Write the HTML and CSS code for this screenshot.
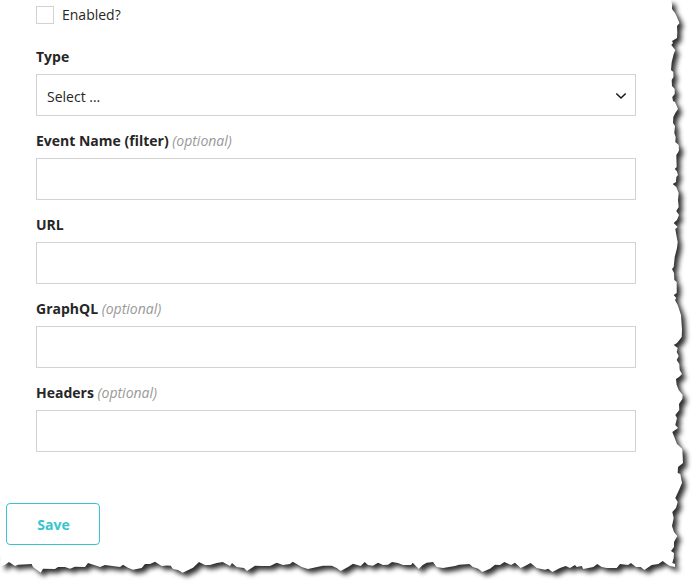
FILE: index.html
```html
<!DOCTYPE html>
<html lang="en">
<head>
<meta charset="utf-8">
<title>Webhook</title>
<link rel="stylesheet" href="styles.css">
</head>
<body>
<svg class="paper" width="693" height="583" viewBox="0 0 693 583" aria-hidden="true">
<path d="M1 0 L671 0 672 4 672 9 675 13 676.5 16 679.5 23 677 26 677.3 33 677 38 672 41 673 43 671.3 45 675.3 50 673.7 54 671.7 62 671 70 673.3 72 673.5 77 671.7 80 672 86 674.7 89 674.7 94 672.3 97 673 101 675 102 678 109 675.3 113 673.3 117 673 123 675 126 674.3 133 675.7 137 675.3 142 678.7 145 679 150 678.3 152 676.3 155 676.7 167 674.7 169 676.7 171 678 175 676.3 177 676 182 672.7 184 676.3 187 678.7 193 678 200 678.7 207 676.3 211 679 215 677 220 673.7 223 677.7 227 675.3 229 676.7 237 677.7 242 677 248 674.7 257 673.7 267 672 269 674 273 674.3 280 676.7 282 676.7 293 673.7 295 676.3 298 675 300 677.7 305 681 315 682 330 681.7 337 677 343 673.7 345 677.7 348 676.7 352 678.7 356 676.7 360 679.3 364 679.7 370 682 374 679 377 676 379 676.7 385 678.7 390 682.7 395 682.3 399 679 404 679.3 410 675.3 415 677 418 675.3 425 678 428 672.3 432 674.3 437 677 444 682.3 449 683 463 678 467 677.7 473 680.3 474 682 483 679 490 675.3 498 677.7 502 676 508 672.3 512 673.7 518 672 526 674 532 677.3 536 674 542 674 547 671 551 674 553 673.7 558 672.3 563 675 564 675 567
L670 566 666.7 564 662.7 561 658.3 564 651.7 565 644.3 570 640.7 567 636 567 631 563 628 565 620 564 616.7 568 606.7 568 601.7 567 597.3 564 593.3 567 583.3 569 581.7 566 576.7 567 575 565 570 568 565.7 566 560 568 552.3 572 548.3 568.7 545 569.7 536.7 568 530.7 563 525 566 520.7 568 515 562.7 511 565 504.3 562 500 565 495 564.7 490 568.7 482.3 572 478.3 568.7 473 567 469.3 564 459 564.7 455 566 443 568 436.7 567 433 562 426.7 562.7 422.7 565 418.7 569 412.7 562.7 411 565 403 565 398 563 392 562 388 564.7 383 565 378 562.7 373 565.7 368 565 364.7 562 360.7 566 353 563.7 348 567 340.7 571 336.7 568 331.7 565.7 323 565.7 317 567 308 569 301.7 567 296.7 564 292.7 561.7 290 564 283 565 276.7 562.7 270 566 262 566 255 565.7 247 571 244 568 236.7 567 232 563
L230 566 222.7 562 216.7 563 210 565 205 565 199 562 193 567.7 182.7 572.7 178 570 173 569 170.7 565.7 167 565.5 161.7 566 155 561.7 150 564 145 564 141.7 568 133 569.7 128 567.7 123 564.7 120 567 105 565 100 567 88 563 85 567 75 566.7 70 568.7 65 567 58 567 55 569 43 568.7 40.7 572.7 33 567 31.7 564 18 564.7 15 566 9 562 5 564.7 1 566Z"/>
</svg>
<form class="form">
  <div class="fields">
    <label class="check"><span class="box"></span>Enabled?</label>
    <div class="field">
      <div class="label">Type</div>
      <div class="control select">
        <span>Select ...</span>
        <svg width="12" height="8" viewBox="0 0 12 8"><path d="M1.3 1.5 6 6 10.7 1.5" fill="none" stroke="#161616" stroke-width="1.5"/></svg>
      </div>
    </div>
    <div class="field"><div class="label">Event Name (filter) <em>(optional)</em></div><div class="control"></div></div>
    <div class="field"><div class="label">URL</div><div class="control"></div></div>
    <div class="field"><div class="label">GraphQL <em>(optional)</em></div><div class="control"></div></div>
    <div class="field"><div class="label">Headers <em>(optional)</em></div><div class="control"></div></div>
  </div>
  <button class="save" type="button">Save</button>
</form>
</body>
</html>
```
FILE: styles.css
```css
* { box-sizing: border-box; }
body {
  margin: 0;
  height: 583px;
  overflow: hidden;
  background: #fff;
  color: #262626;
  font: 14px/20px "Open Sans", "Noto Sans", sans-serif;
}
.paper {
  position: absolute;
  top: 0;
  left: 0;
  z-index: -1;
  fill: #fff;
  filter: drop-shadow(4px 4px 2.6px rgba(0, 0, 0, 0.82));
}
.form { width: 660px; height: 555px; padding: 5px 0 0 6px; background: #fff; }
.fields { width: 600px; margin-left: 30px; }
.check { display: flex; align-items: center; gap: 8px; height: 20px; }
.box { width: 18px; height: 18px; border: 1px solid #d2d2d2; }
.field { padding-top: 15px; }
.check + .field { padding-top: 22px; }
.label { height: 27px; font-weight: 700; }
.label em { font-weight: 400; color: #999; }
.control { height: 42px; border: 1px solid #d2d2d2; background: #fff; }
.select {
  display: flex;
  align-items: center;
  justify-content: space-between;
  padding: 4px 8px 0 10px;
}
.select svg { margin-bottom: 2px; }
.save {
  display: block;
  width: 94px;
  height: 42px;
  margin-top: 51px;
  padding: 2px 0 0 1px;
  border: 1px solid #36c5cf;
  border-radius: 4px;
  background: #fff;
  color: #36c5cf;
  font: 700 14px/20px "Open Sans", sans-serif;
}
```
